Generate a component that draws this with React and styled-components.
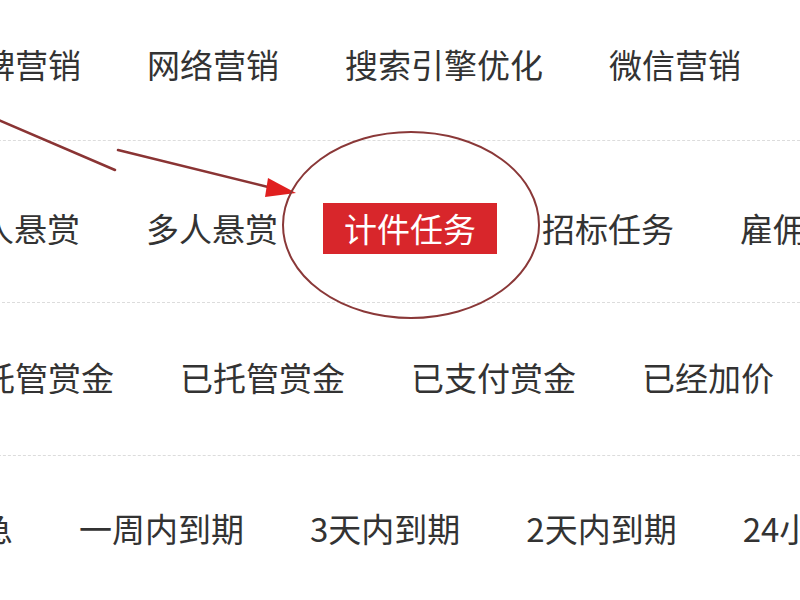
import React from 'react'
import styled, { createGlobalStyle } from 'styled-components';

const Global = createGlobalStyle`
  html, body { margin: 0; padding: 0; background: #fff; }
  body { font-family: "Noto Sans CJK SC", "Microsoft YaHei", "Noto Sans", sans-serif; }
`;

const Page = styled.div`
  position: relative;
  width: 800px;
  height: 600px;
  overflow: hidden;
  background: #fff;
`;

const FilterList = styled.div`
  display: flex;
  flex-direction: column;
`;

const Row = styled.div`
  display: flex;
  align-items: center;
  gap: 24px;
  height: ${({ $h }) => $h}px;
  padding-top: ${({ $pt }) => $pt || 0}px;
  padding-bottom: ${({ $pb }) => $pb || 0}px;
  margin-left: ${({ $offset }) => $offset}px;
  border-bottom: ${({ $last }) => ($last ? "none" : "1px dashed #dcdcdc")};
  box-sizing: border-box;
  white-space: nowrap;
`;

const Item = styled.span`
  display: flex;
  align-items: center;
  height: 51px;
  padding: 0 21px;
  font-size: 33px;
  line-height: 1;
  color: ${({ $active }) => ($active ? "#fff" : "#333")};
  background: ${({ $active }) => ($active ? "#d8262b" : "transparent")};
  flex-shrink: 0;
  cursor: pointer;
`;

const Annotation = styled.svg`
  position: absolute;
  left: 0;
  top: 0;
  pointer-events: none;
`;

const rows = [
  { h: 141, pb: 12, offset: -72, items: ["品牌营销", "网络营销", "搜索引擎优化", "微信营销", "软文营销"] },
  { h: 162, pt: 14, offset: -73, items: ["单人悬赏", "多人悬赏", "计件任务", "招标任务", "雇佣任务"], active: "计件任务" },
  { h: 153, pb: 4, offset: -72, items: ["未托管赏金", "已托管赏金", "已支付赏金", "已经加价"] },
  { h: 144, offset: -74, items: ["加急", "一周内到期", "3天内到期", "2天内到期", "24小时内到期"], last: true },
];

const App = () => {
  return (
    <Page>
      <Global />
      <FilterList>
        {rows.map((r, i) => (
          <Row key={i} $h={r.h} $pt={r.pt} $pb={r.pb} $offset={r.offset} $last={r.last}>
            {r.items.map((t) => (
              <Item key={t} $active={r.active === t}>{t}</Item>
            ))}
          </Row>
        ))}
      </FilterList>
      <Annotation width="800" height="600" viewBox="0 0 800 600">
        <line x1="-4" y1="119" x2="115" y2="170" stroke="#8a3434" strokeWidth="2.5" strokeLinecap="round" />
        <line x1="118" y1="150" x2="272" y2="188" stroke="#8a3434" strokeWidth="2.5" strokeLinecap="round" />
        <polygon points="268,178 296,193 265,197" fill="#e01f1f" />
        <ellipse cx="411" cy="225" rx="128" ry="93" fill="none" stroke="#8a3838" strokeWidth="2" />
      </Annotation>
    </Page>
  )
}

export default App
